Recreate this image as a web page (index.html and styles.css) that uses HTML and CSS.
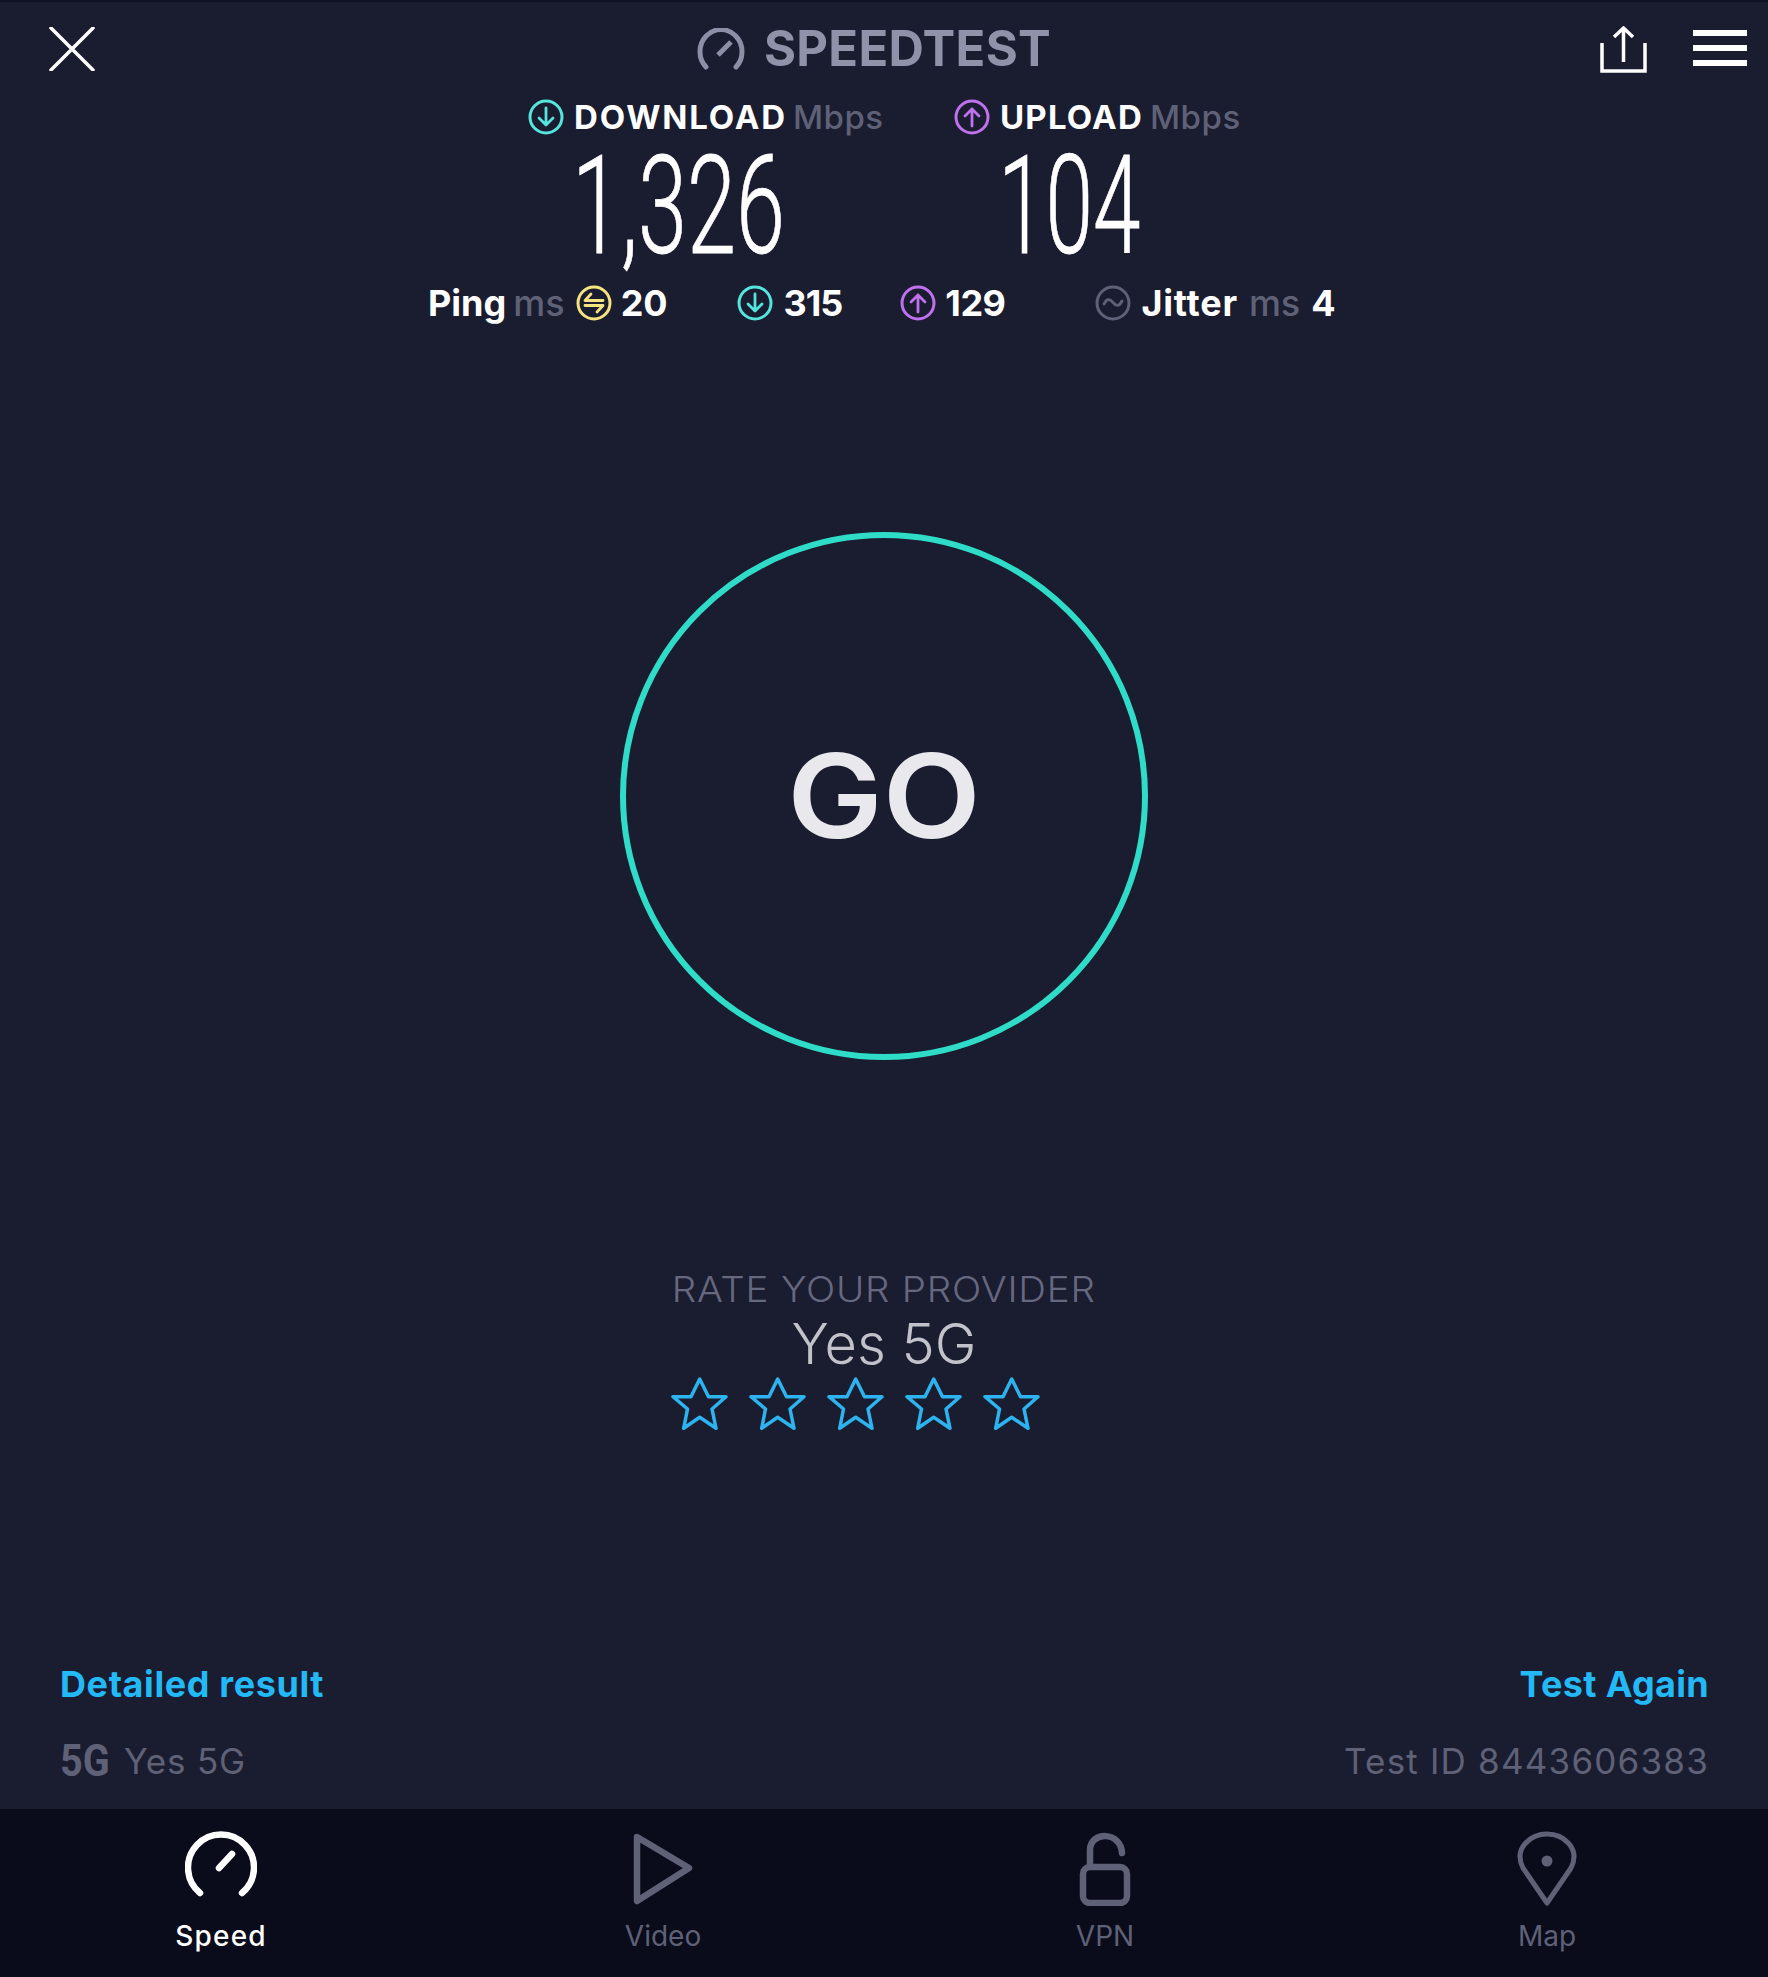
FILE: index.html
```html
<!DOCTYPE html>
<html lang="en">
<head>
<meta charset="utf-8">
<title>Speedtest</title>
<link rel="stylesheet" href="styles.css">
</head>
<body>
<div class="app">
  <header class="top">
    <svg class="ic-close" viewBox="0 0 46 44"><path d="M2 1 L44 43 M44 1 L2 43"/></svg>
    <div class="brand">
      <svg class="ic-brand" viewBox="0 0 48 42"><path d="M9 39 A21 22 0 1 1 39 39"/><path class="needle" d="M21 27 L34 14"/></svg>
      <span class="brand-name">SPEEDTEST</span>
    </div>
    <div class="actions">
      <svg class="ic-share" viewBox="0 0 47 47"><path d="M2 17 V45 H45 V17 M23.500 36 V2 M14 11 L23.500 2 L33 11"/></svg>
      <div class="burger"><span></span><span></span><span></span></div>
    </div>
  </header>

  <section class="speeds">
    <div class="speed speed-down">
      <div class="speed-label">
        <svg class="ic-circle down" viewBox="0 0 36 36"><circle cx="18" cy="18" r="16"/><path d="M18 9 V26 M11 19 L18 26 L25 19"/></svg>
        <b>DOWNLOAD</b><span class="unit">Mbps</span>
      </div>
      <div class="speed-value"><span>1,326</span></div>
    </div>
    <div class="speed speed-up">
      <div class="speed-label">
        <svg class="ic-circle up" viewBox="0 0 36 36"><circle cx="18" cy="18" r="16"/><path d="M18 27 V10 M11 17 L18 10 L25 17"/></svg>
        <b>UPLOAD</b><span class="unit">Mbps</span>
      </div>
      <div class="speed-value"><span>104</span></div>
    </div>
  </section>

  <section class="stats">
    <div class="stat stat-ping">
      <b>Ping</b><span class="unit">ms</span>
      <svg class="ic-circle ping" viewBox="0 0 36 36"><circle cx="18" cy="18" r="16"/><path d="M15 9 L9 15.500 H27 M9 20.500 H27 L21 27"/></svg>
      <b>20</b>
    </div>
    <div class="stat stat-dl">
      <svg class="ic-circle down" viewBox="0 0 36 36"><circle cx="18" cy="18" r="16"/><path d="M18 9 V26 M11 19 L18 26 L25 19"/></svg>
      <b>315</b>
    </div>
    <div class="stat stat-ul">
      <svg class="ic-circle up" viewBox="0 0 36 36"><circle cx="18" cy="18" r="16"/><path d="M18 27 V10 M11 17 L18 10 L25 17"/></svg>
      <b>129</b>
    </div>
    <div class="stat stat-jitter">
      <svg class="ic-circle jitter" viewBox="0 0 36 36"><circle cx="18" cy="18" r="16"/><path d="M9 19 C12 13 15 14 18 17.500 C21 21 24 22 27 16"/></svg>
      <b>Jitter</b><span class="unit">ms</span><b>4</b>
    </div>
  </section>

  <main class="go-wrap">
    <div class="go"><span>GO</span></div>
  </main>

  <section class="rate">
    <div class="rate-title"><span>RATE YOUR PROVIDER</span></div>
    <div class="rate-name">Yes 5G</div>
    <div class="stars">
      <svg class="star" viewBox="-2 -2 58 54"><path d="M26.700 0 L35.500 17.700 H53 L39 30 L43 49.300 L26.700 38.300 L10.700 49.300 L14.500 30 L0 17.700 H18 Z"/></svg>
      <svg class="star" viewBox="-2 -2 58 54"><path d="M26.700 0 L35.500 17.700 H53 L39 30 L43 49.300 L26.700 38.300 L10.700 49.300 L14.500 30 L0 17.700 H18 Z"/></svg>
      <svg class="star" viewBox="-2 -2 58 54"><path d="M26.700 0 L35.500 17.700 H53 L39 30 L43 49.300 L26.700 38.300 L10.700 49.300 L14.500 30 L0 17.700 H18 Z"/></svg>
      <svg class="star" viewBox="-2 -2 58 54"><path d="M26.700 0 L35.500 17.700 H53 L39 30 L43 49.300 L26.700 38.300 L10.700 49.300 L14.500 30 L0 17.700 H18 Z"/></svg>
      <svg class="star" viewBox="-2 -2 58 54"><path d="M26.700 0 L35.500 17.700 H53 L39 30 L43 49.300 L26.700 38.300 L10.700 49.300 L14.500 30 L0 17.700 H18 Z"/></svg>
    </div>
  </section>

  <section class="result">
    <div class="result-row links">
      <span>Detailed result</span>
      <span class="again">Test Again</span>
    </div>
    <div class="result-row meta">
      <span class="provider"><b class="net">5G</b><span>Yes 5G</span></span>
      <span class="test-id">Test ID 8443606383</span>
    </div>
  </section>

  <nav class="tabs">
    <div class="tab active">
      <svg class="tab-ic" viewBox="0 0 72 76"><path d="M15 63 A33 33 0 1 1 57 63"/><path d="M34 38 L47 24"/></svg>
      <span>Speed</span>
    </div>
    <div class="tab">
      <svg class="tab-ic" viewBox="0 0 72 76"><path d="M10 7 L62 38 L10 71 Z"/></svg>
      <span>Video</span>
    </div>
    <div class="tab">
      <svg class="tab-ic" viewBox="0 0 72 76"><rect x="14" y="37" width="44" height="36" rx="7"/><path d="M21 36 V20 C21 1 52 1 53 23"/></svg>
      <span>VPN</span>
    </div>
    <div class="tab">
      <svg class="tab-ic pin" viewBox="0 0 72 76"><path d="M36 73 L12 38 C2 18 20 4 36 4 C52 4 70 18 60 38 Z"/><circle cx="36" cy="31" r="5.500"/></svg>
      <span>Map</span>
    </div>
  </nav>
</div>
</body>
</html>
```

FILE: styles.css
```css
* { box-sizing: border-box; }
html, body { margin: 0; padding: 0; }
body {
  background: #1a1c2f;
  font-family: Inter, "Noto Sans", "Liberation Sans", sans-serif;
  color: #fff;
}
svg { display: block; fill: none; }
.app {
  width: 1768px;
  height: 1977px;
  display: flex;
  flex-direction: column;
  border-top: 2px solid #0f1224;
  overflow: hidden;
}

/* Header */
.top {
  height: 95px;
  display: grid;
  grid-template-columns: 1fr auto 1fr;
  align-items: center;
  padding: 0 21px 0 49px;
}
.ic-close { width: 46px; height: 44px; margin-top: -1px; }
.ic-close path { stroke: #fff; stroke-width: 3.500; stroke-linecap: round; }
.brand { display: flex; align-items: center; gap: 19px; margin: -2px 48px 0 0; }
.ic-brand { width: 48px; height: 42px; }
.ic-brand path { stroke: #8c8fa6; stroke-width: 5; stroke-linecap: round; }
.ic-brand .needle { stroke-width: 5; stroke-linecap: butt; }
.brand-name {
  font-size: 49px;
  line-height: 50px;
  font-weight: 700;
  color: #8f92a9;
  letter-spacing: 0.3px;
}
.actions { display: flex; justify-content: flex-end; align-items: center; gap: 46px; margin-top: -1px; }
.ic-share { width: 47px; height: 47px; }
.ic-share path { stroke: #fff; stroke-width: 3.500; }
.burger { width: 54px; display: flex; flex-direction: column; gap: 9px; margin-top: -2px; }
.burger span { display: block; height: 6px; background: #fff; }

/* Speeds */
.speeds { display: flex; padding: 2px 0 0 528px; }
.speed-down { width: 426px; }
.speed-label { display: flex; align-items: center; height: 36px; font-size: 33px; }
.speed-label b { font-weight: 700; margin-left: 10px; }
.speed-down .speed-label b { letter-spacing: 1.850px; }
.speed-up .speed-label b { letter-spacing: 1.200px; }
.unit { color: #5f6177; font-weight: 500; }
.speed-label .unit { margin-left: 6px; letter-spacing: 0.5px; }
.speed-up .speed-label .unit { margin-left: 7px; }
.ic-circle { width: 36px; height: 36px; flex: none; }
.ic-circle circle { stroke-width: 3; }
.ic-circle path { stroke-width: 2.800; stroke-linecap: round; stroke-linejoin: round; }
.ic-circle.down circle, .ic-circle.down path { stroke: #54e6dd; }
.ic-circle.up circle, .ic-circle.up path { stroke: #bf71ee; }
.ic-circle.ping circle, .ic-circle.ping path { stroke: #f6e27f; }
.ic-circle.jitter circle, .ic-circle.jitter path { stroke: #5f6177; }
.speed-value {
  height: 150px;
  padding: 13px 0 0 44px;
  font-family: Roboto, "Liberation Sans", sans-serif;
  font-weight: 300;
  font-size: 137px;
  line-height: 116px;
  -webkit-text-stroke: 0.8px #fff;
}
.speed-value span { display: inline-block; transform: scaleX(0.645); transform-origin: 0 50%; }
.speed-up .speed-value span { transform: scaleX(0.625); }

/* Stats */
.stats { display: flex; align-items: center; height: 36px; padding-left: 428px; font-size: 36px; }
.stat { display: flex; align-items: center; }
.stat b { font-weight: 700; }
.stat-ping .unit { margin-left: 7px; }
.stat-ping .ic-circle { margin: 0 9px 0 11px; }
.stat-dl { margin-left: 69px; }
.stat-ul { margin-left: 58px; }
.stat-jitter { margin-left: 90px; }
.stat-dl b { margin-left: 11px; letter-spacing: -1px; }
.stat-ul b { margin-left: 9px; letter-spacing: -0.5px; }
.stat-jitter b:first-of-type { margin-left: 10px; letter-spacing: 0.8px; }
.stat-jitter .unit { margin: 0 11px; }

/* GO */
.go-wrap { display: flex; justify-content: center; margin-top: 211px; }
.go {
  width: 528px;
  height: 528px;
  border: 6px solid #2fdcc8;
  border-radius: 50%;
  display: flex;
  align-items: center;
  justify-content: center;
  font-size: 116px;
  font-weight: 600;
  color: #e9e9ed;
}
.go span { display: inline-block; transform: scaleX(1.100); }

/* Rate */
.rate { margin-top: 204px; text-align: center; }
.rate-title { font-size: 35px; line-height: 50px; font-weight: 300; letter-spacing: 0.7px; color: #666880; }
.rate-title span { display: inline-block; transform: scaleX(1.100); }
.rate-name { font-size: 56px; line-height: 60px; font-weight: 300; color: #c2c2ca; }
.stars { display: flex; gap: 20px; padding-left: 671px; margin-top: 3px; }
.star { width: 58px; height: 54px; }
.star path { stroke: #2db4f0; stroke-width: 3.500; stroke-linejoin: round; }

/* Result */
.result { margin-top: auto; padding: 0 59px 0 60px; }
.result-row { display: flex; justify-content: space-between; align-items: center; }
.links { font-size: 36px; line-height: 44px; font-weight: 700; letter-spacing: 0.6px; color: #22b9f6; }
.again { letter-spacing: 0.3px; }
.meta { font-size: 35px; line-height: 44px; letter-spacing: 1.200px; color: #5f6177; margin-top: 33px; margin-bottom: 26px; }
.provider { display: flex; align-items: center; gap: 14px; letter-spacing: 0.8px; }
.net {
  display: inline-block;
  width: 50px;
  font-family: Roboto, "Liberation Sans", sans-serif;
  font-size: 44px;
  font-weight: 700;
  letter-spacing: 0;
  white-space: nowrap;
  transform: scaleX(0.9);
  transform-origin: 0 50%;
}

/* Tabs */
.tabs { height: 168px; background: #0a0c1b; display: grid; grid-template-columns: repeat(4, 1fr); flex: none; }
.tab {
  display: flex;
  flex-direction: column;
  align-items: center;
  padding-top: 21px;
  font-size: 28px;
  line-height: 34px;
  color: #5f6177;
}
.tab-ic { width: 72px; height: 76px; margin-bottom: 13px; }
.tab-ic path, .tab-ic rect { stroke: #5f6177; stroke-width: 6.500; stroke-linejoin: round; stroke-linecap: round; }
.tab-ic circle { fill: #5f6177; }
.tab-ic.pin path { stroke-width: 5; }
.tab.active { color: #fff; font-weight: 500; letter-spacing: 1.200px; }
.tab.active .tab-ic path { stroke: #fff; }
```
